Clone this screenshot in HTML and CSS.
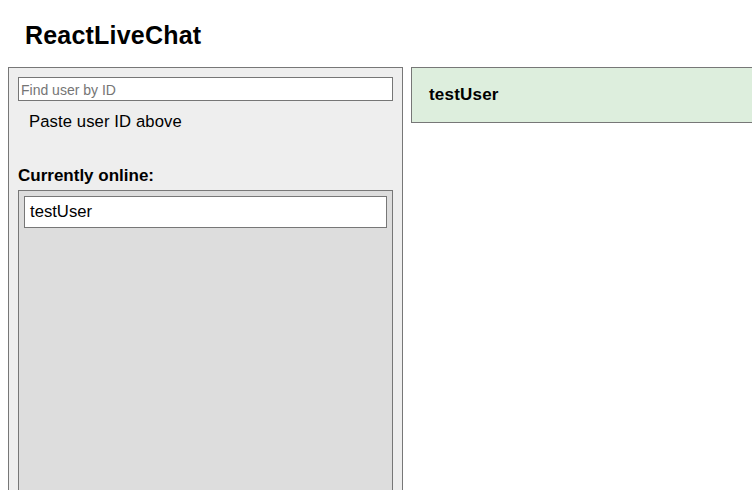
FILE: index.html
```html
<!DOCTYPE html>
<html lang="en">
<head>
<meta charset="utf-8">
<title>ReactLiveChat</title>
<link rel="stylesheet" href="styles.css">
</head>
<body>
<div class="page">
  <header class="top">
    <h1 class="title">ReactLiveChat</h1>
  </header>
  <div class="main">
    <aside class="sidebar">
      <input class="search" type="text" placeholder="Find user by ID">
      <p class="hint">Paste user ID above</p>
      <h3 class="online-title">Currently online:</h3>
      <ul class="online-list">
        <li class="online-item">testUser</li>
      </ul>
    </aside>
    <section class="chat">
      <div class="chat-header">testUser</div>
    </section>
  </div>
</div>
</body>
</html>
```

FILE: styles.css
```css
html, body {
  margin: 0;
  padding: 0;
  background: #ffffff;
}

body {
  font-family: "Liberation Sans", Arial, sans-serif;
  color: #000000;
}

.page {
  height: 100vh;
  overflow: hidden;
}

.top {
  padding: 20px 0 0 25px;
}

.title {
  margin: 0;
  font-size: 25px;
  line-height: 30px;
  font-weight: bold;
  letter-spacing: 0.2px;
}

.main {
  display: flex;
  align-items: flex-start;
  gap: 8px;
  margin-top: 17px;
  padding-left: 8px;
}

.sidebar {
  flex: 0 0 auto;
  width: 375px;
  height: 600px;
  padding: 9px;
  background: #eeeeee;
  border: 1px solid #777777;
  display: flex;
  flex-direction: column;
}

.search {
  box-sizing: border-box;
  width: 375px;
  height: 24px;
  margin: 0;
  padding: 1px 2px 0 2px;
  border: 1px solid #767676;
  background: #ffffff;
  font-family: "Liberation Sans", Arial, sans-serif;
  font-size: 14px;
  color: #000000;
  outline: none;
}

.search::placeholder {
  color: #757575;
}

.hint {
  margin: 11px 0 0 11px;
  font-size: 16.67px;
  line-height: 20px;
  letter-spacing: 0.1px;
}

.online-title {
  margin: 34px 0 0 0;
  font-size: 17px;
  line-height: 20px;
  font-weight: bold;
}

.online-list {
  flex: 1 1 auto;
  list-style: none;
  margin: 4px 0 0 0;
  padding: 5px;
  background: #dddddd;
  border: 1px solid #777777;
}

.online-item {
  height: 30px;
  padding: 0 5px;
  background: #ffffff;
  border: 1px solid #777777;
  font-size: 16.67px;
  line-height: 30px;
}

.chat {
  flex: 0 0 auto;
  width: 420px;
}

.chat-header {
  height: 20px;
  padding: 17px 17px 17px 17px;
  background: #ddeedd;
  border: 1px solid #777777;
  font-size: 17px;
  line-height: 20px;
  font-weight: bold;
  letter-spacing: 0.2px;
}
```
